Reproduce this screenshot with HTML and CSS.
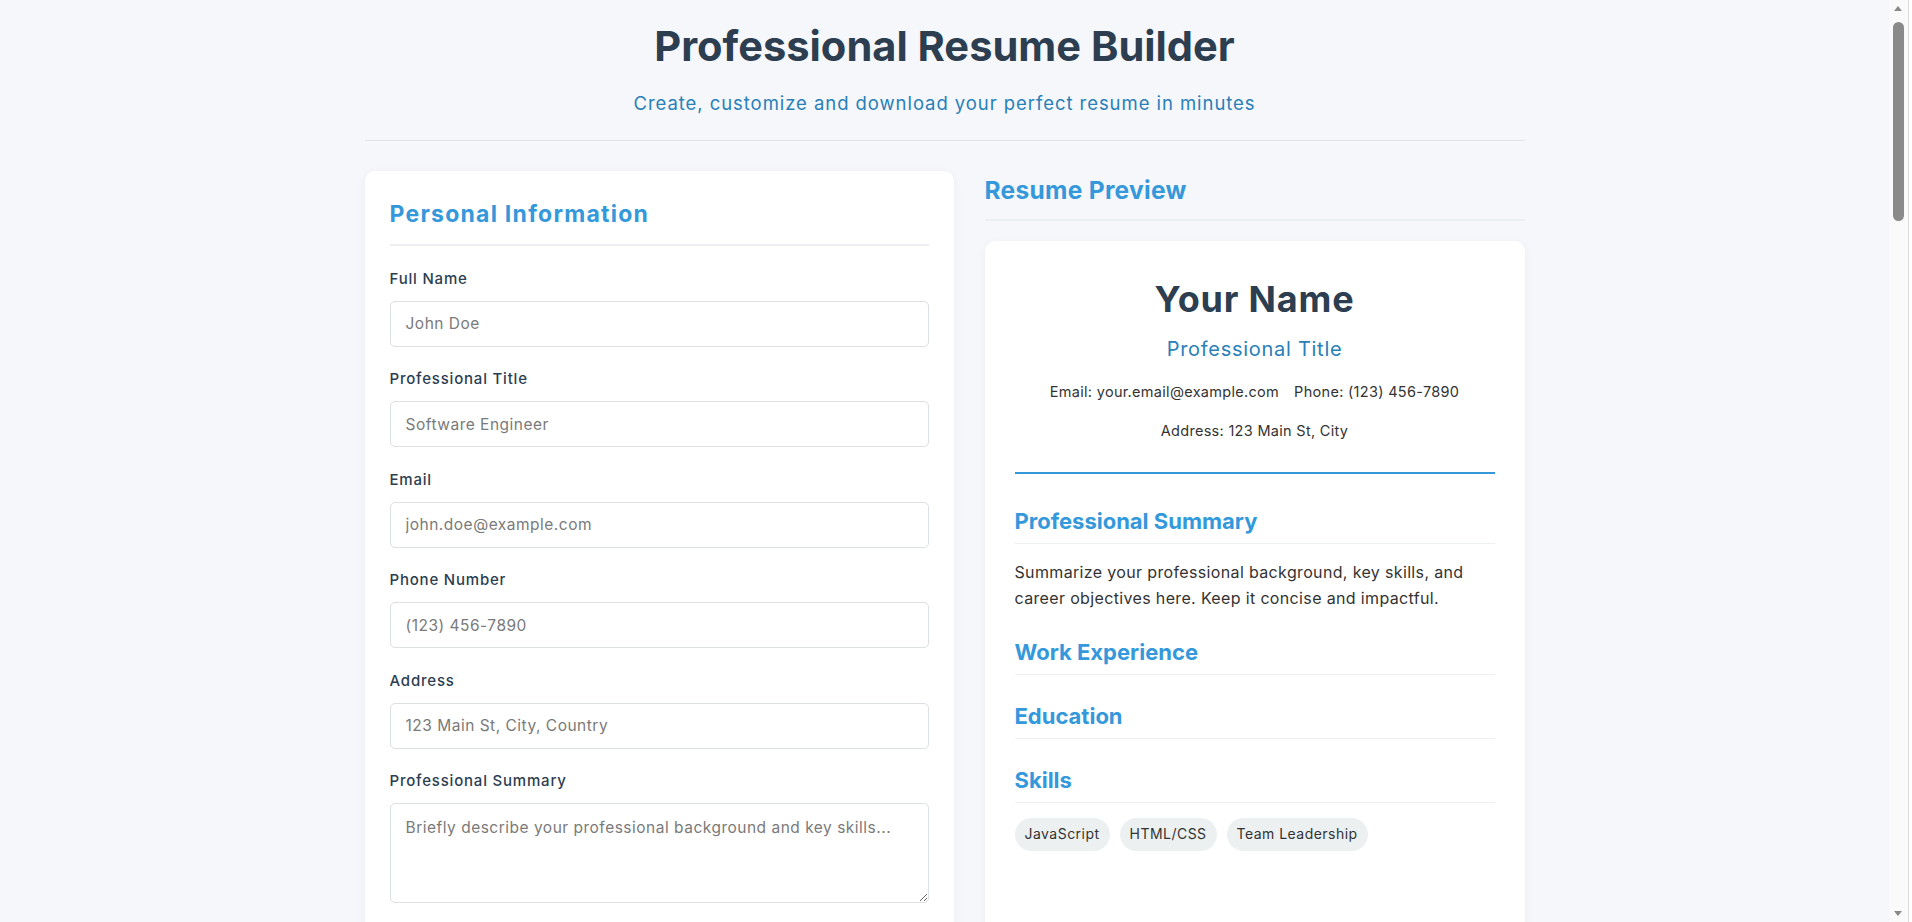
FILE: index.html
```html
<!DOCTYPE html>
<html lang="en">
<head>
<meta charset="utf-8">
<title>Professional Resume Builder</title>
<link rel="stylesheet" href="styles.css">
</head>
<body>
<div class="container">
  <header class="header">
    <h1 class="title">Professional Resume Builder</h1>
    <p class="subtitle">Create, customize and download your perfect resume in minutes</p>
  </header>

  <main class="app">
    <div class="editor">
      <section class="card">
        <h2 class="card-title">Personal Information</h2>
        <div class="field">
          <label for="fullName">Full Name</label>
          <input id="fullName" type="text" placeholder="John Doe">
        </div>
        <div class="field">
          <label for="jobTitle">Professional Title</label>
          <input id="jobTitle" type="text" placeholder="Software Engineer">
        </div>
        <div class="field">
          <label for="email">Email</label>
          <input id="email" type="email" placeholder="john.doe@example.com">
        </div>
        <div class="field">
          <label for="phone">Phone Number</label>
          <input id="phone" type="tel" placeholder="(123) 456-7890">
        </div>
        <div class="field">
          <label for="address">Address</label>
          <input id="address" type="text" placeholder="123 Main St, City, Country">
        </div>
        <div class="field">
          <label for="summary">Professional Summary</label>
          <textarea id="summary" placeholder="Briefly describe your professional background and key skills..."></textarea>
        </div>
      </section>

      <section class="card">
        <h2 class="card-title">Work Experience</h2>
        <div class="entry">
          <div class="field"><label>Job Title</label><input type="text" placeholder="Senior Developer"></div>
          <div class="field"><label>Company</label><input type="text" placeholder="Tech Company Inc."></div>
          <div class="field"><label>Duration</label><input type="text" placeholder="Jan 2020 - Present"></div>
          <div class="field"><label>Description</label><textarea placeholder="Describe your responsibilities and achievements..."></textarea></div>
        </div>
        <div class="entry">
          <div class="field"><label>Job Title</label><input type="text" placeholder="Developer"></div>
          <div class="field"><label>Company</label><input type="text" placeholder="Startup LLC"></div>
          <div class="field"><label>Duration</label><input type="text" placeholder="2017 - 2019"></div>
          <div class="field"><label>Description</label><textarea placeholder="Describe your responsibilities and achievements..."></textarea></div>
        </div>
        <div class="entry">
          <div class="field"><label>Job Title</label><input type="text" placeholder="Junior Developer"></div>
          <div class="field"><label>Company</label><input type="text" placeholder="Agency Co."></div>
          <div class="field"><label>Duration</label><input type="text" placeholder="2015 - 2017"></div>
          <div class="field"><label>Description</label><textarea placeholder="Describe your responsibilities and achievements..."></textarea></div>
        </div>
        <button class="btn btn-secondary" type="button">+ Add Experience</button>
      </section>

      <section class="card">
        <h2 class="card-title">Education</h2>
        <div class="entry">
          <div class="field"><label>Degree</label><input type="text" placeholder="Bachelor of Science in Computer Science"></div>
          <div class="field"><label>Institution</label><input type="text" placeholder="University Name"></div>
          <div class="field"><label>Year</label><input type="text" placeholder="2015 - 2019"></div>
        </div>
        <div class="entry">
          <div class="field"><label>Degree</label><input type="text" placeholder="High School Diploma"></div>
          <div class="field"><label>Institution</label><input type="text" placeholder="School Name"></div>
          <div class="field"><label>Year</label><input type="text" placeholder="2011 - 2015"></div>
        </div>
        <button class="btn btn-secondary" type="button">+ Add Education</button>
      </section>

      <section class="card">
        <h2 class="card-title">Skills</h2>
        <div class="field"><label>Add a Skill</label><input type="text" placeholder="e.g. JavaScript"></div>
        <button class="btn btn-secondary" type="button">+ Add Skill</button>
      </section>

      <section class="card">
        <h2 class="card-title">Languages</h2>
        <div class="field"><label>Add a Language</label><input type="text" placeholder="e.g. English (Native)"></div>
        <button class="btn btn-secondary" type="button">+ Add Language</button>
      </section>

      <div class="actions">
        <button class="btn btn-primary" type="button">Update Preview</button>
        <button class="btn btn-primary" type="button">Download PDF</button>
      </div>
    </div>

    <div class="preview-col">
      <h2 class="preview-heading">Resume Preview</h2>
      <div class="resume">
        <div class="resume-header">
          <h1 class="resume-name">Your Name</h1>
          <div class="resume-title">Professional Title</div>
          <div class="contact">
            <span>Email: your.email@example.com</span>
            <span>Phone: (123) 456-7890</span>
            <span>Address: 123 Main St, City</span>
          </div>
        </div>
        <div class="resume-section">
          <h3>Professional Summary</h3>
          <p class="summary-text">Summarize your professional background, key skills, and career objectives here. Keep it concise and impactful.</p>
        </div>
        <div class="resume-section">
          <h3>Work Experience</h3>
        </div>
        <div class="resume-section">
          <h3>Education</h3>
        </div>
        <div class="resume-section">
          <h3>Skills</h3>
          <div class="tags">
            <span class="tag">JavaScript</span>
            <span class="tag">HTML/CSS</span>
            <span class="tag">Team Leadership</span>
          </div>
        </div>
      </div>
    </div>
  </main>
</div>

<div class="scrollbar" aria-hidden="true">
  <div class="sb-track">
    <span class="sb-arrow sb-up"></span>
    <span class="sb-thumb"></span>
    <span class="sb-arrow sb-down"></span>
  </div>
  <div class="sb-frame"></div>
</div>
</body>
</html>
```

FILE: styles.css
```css
html {
  background: #f5f7fa;
}

body {
  margin: 0;
  padding-right: 23px;
  font-family: Inter, "DejaVu Sans", sans-serif;
  color: #333;
  background: #f5f7fa;
}

/* Window scrollbar (drawn, since the page is photographed without one) */
.scrollbar {
  position: fixed;
  top: 0;
  right: 0;
  bottom: 0;
  width: 23px;
  display: flex;
  z-index: 10;
}

.sb-track {
  position: relative;
  width: 19px;
  background: #fafafa;
}

.sb-thumb {
  position: absolute;
  left: 4px;
  top: 22px;
  width: 11px;
  height: 199px;
  border-radius: 6px;
  background: #8a8a8a;
}

.sb-arrow {
  position: absolute;
  left: 5px;
  width: 0;
  height: 0;
  border-left: 4.5px solid transparent;
  border-right: 4.5px solid transparent;
}

.sb-up {
  top: 6px;
  border-bottom: 5px solid #8a8a8a;
}

.sb-down {
  bottom: 6px;
  border-top: 5px solid #8a8a8a;
}

.sb-frame {
  flex: 1;
  background: #fff;
  border-left: 1px solid #dcdcdc;
}

.container {
  width: 1160px;
  margin: 0 auto;
  padding-bottom: 16px;
}

/* Header */
.header {
  text-align: center;
  padding: 22px 0 23px;
  border-bottom: 1px solid #e0e3e8;
  margin-bottom: 30px;
}

.title {
  margin: 0;
  font-size: 41.6px;
  line-height: 48px;
  font-weight: 700;
  color: #2c3e50;
}

.subtitle {
  margin: 20px 0 0;
  font-size: 18.5px;
  line-height: 27px;
  color: #2980b9;
  letter-spacing: 0.94px;
}

/* Layout */
.app {
  display: grid;
  grid-template-columns: 589px 540px;
  column-gap: 31px;
  align-items: start;
}

.editor {
  display: flex;
  flex-direction: column;
  gap: 30px;
}

.card {
  background: #fff;
  border-radius: 10px;
  box-shadow: 0 2px 10px rgba(0, 0, 0, 0.05);
  padding: 25px;
}

.card-title {
  margin: 0 0 21.5px;
  padding-bottom: 12px;
  border-bottom: 2px solid #eceff1;
  font-size: 23px;
  line-height: 36px;
  font-weight: 700;
  color: #3498db;
  letter-spacing: 1.25px;
}

.field {
  margin-bottom: 21.5px;
}

.field label {
  display: block;
  margin-bottom: 11px;
  font-size: 15px;
  line-height: 22px;
  font-weight: 500;
  color: #2c3e50;
  letter-spacing: 0.8px;
}

.field input,
.field textarea {
  display: block;
  width: 100%;
  box-sizing: border-box;
  border: 1px solid #dcdfe3;
  border-radius: 5px;
  background: #fff;
  font-family: Inter, "DejaVu Sans", sans-serif;
  font-size: 15.5px;
  color: #333;
  letter-spacing: 0.5px;
}

.field input {
  height: 46px;
  padding: 0 15px;
}

.field textarea {
  height: 100px;
  padding: 12px 15px;
  line-height: 24px;
  resize: vertical;
}

.field input::placeholder,
.field textarea::placeholder {
  color: #7a7a7a;
}

.entry {
  padding-bottom: 4px;
  margin-bottom: 20px;
  border-bottom: 1px dashed #e5e8eb;
}

.btn {
  font-family: Inter, "DejaVu Sans", sans-serif;
  font-size: 15px;
  border: none;
  border-radius: 5px;
  padding: 12px 22px;
  cursor: pointer;
}

.btn-secondary {
  background: #ecf0f1;
  color: #2c3e50;
}

.btn-primary {
  background: #3498db;
  color: #fff;
}

.actions {
  display: flex;
  gap: 15px;
}

/* Preview */
.preview-heading {
  margin: 1px 0 20px;
  padding-bottom: 11px;
  border-bottom: 2px solid #eceff1;
  font-size: 24.5px;
  line-height: 36px;
  font-weight: 700;
  color: #3498db;
  letter-spacing: 0.3px;
}

.resume {
  background: #fff;
  border-radius: 10px;
  box-shadow: 0 2px 10px rgba(0, 0, 0, 0.05);
  padding: 30px;
  min-height: 900px;
}

.resume-header {
  text-align: center;
  padding-bottom: 29.5px;
  border-bottom: 2px solid #3498db;
  margin-bottom: 32.6px;
}

.resume-name {
  margin: 0;
  font-size: 36px;
  line-height: 56px;
  font-weight: 700;
  color: #2c3e50;
  letter-spacing: 0.8px;
}

.resume-title {
  margin-top: 6.7px;
  font-size: 20px;
  line-height: 30px;
  color: #2980b9;
  letter-spacing: 0.72px;
}

.contact {
  margin-top: 16.8px;
  display: flex;
  flex-wrap: wrap;
  justify-content: center;
  gap: 15.7px 15px;
  font-size: 14.5px;
  line-height: 23px;
  color: #333;
  letter-spacing: 0.3px;
}

.resume-section {
  margin-bottom: 26px;
}

.resume-section h3 {
  margin: 0 0 15px;
  padding-bottom: 7px;
  border-bottom: 1px solid #eceff1;
  font-size: 22px;
  line-height: 30px;
  font-weight: 700;
  color: #3498db;
}

.summary-text {
  margin: 0;
  font-size: 16px;
  line-height: 26px;
  color: #333;
  letter-spacing: 0.35px;
}

.tags {
  display: flex;
  flex-wrap: wrap;
  gap: 10px;
}

.tag {
  background: #ecf0f1;
  border-radius: 20px;
  padding: 5px 10px;
  font-size: 14px;
  line-height: 22.7px;
  color: #333;
  letter-spacing: 0.47px;
}
```
